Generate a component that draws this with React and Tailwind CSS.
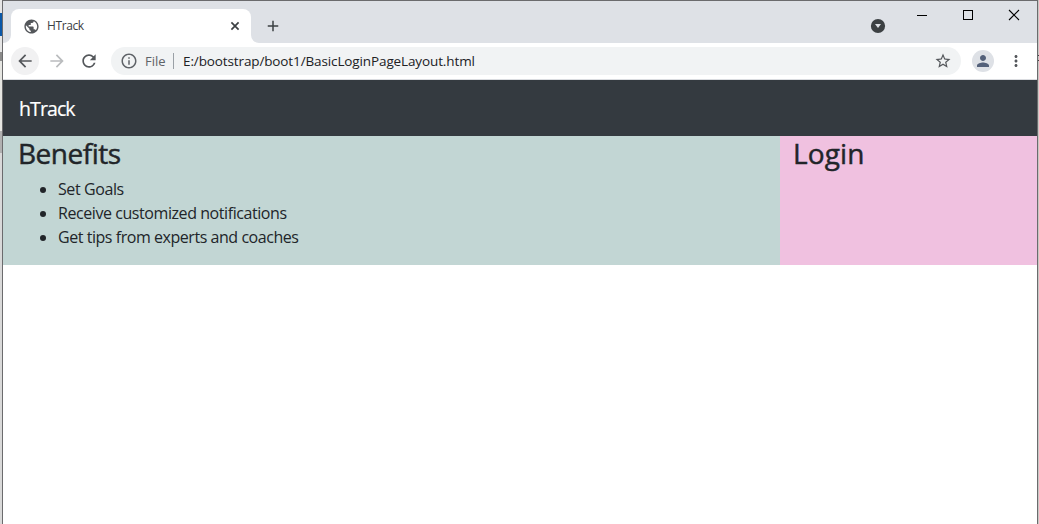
import React from "react";
import {
  MdPublic, MdAdd, MdArrowBack, MdArrowForward, MdRefresh,
  MdInfoOutline, MdStarBorder, MdPerson, MdMoreVert,
} from "react-icons/md";

function TabStrip() {
  return (
    <div className="flex h-[42px] bg-[#dee1e6]">
      <div className="flex w-2 items-end bg-[linear-gradient(to_top,#fff_8px,#dee1e6_8px)]">
        <div className="h-full w-full rounded-br-lg bg-[#dee1e6]" />
      </div>
      <div className="flex w-[240px] flex-col bg-[#dee1e6] pt-2">
        <div className="flex flex-1 items-center rounded-t-lg bg-white pr-[11px] pl-3">
          <MdPublic className="size-[17px] text-[#54575b]" />
          <span className="ml-[7px] flex-1 text-[12px] tracking-[-0.4px] text-[#3c4043]">HTrack</span>
          <svg className="size-[10px] text-[#3c4043]" viewBox="0 0 10 10">
            <path d="M1.4 1.4l7.2 7.2M8.6 1.4L1.4 8.6" stroke="currentColor" strokeWidth="1.7" />
          </svg>
        </div>
      </div>
      <div className="flex w-2 bg-white">
        <div className="h-full w-full rounded-bl-lg bg-[#dee1e6]" />
      </div>
      <div className="flex flex-1 pt-[16px] pl-[5px]">
        <MdAdd className="size-[18px] text-[#3c4043]" stroke="#3c4043" strokeWidth="0" />
      </div>
      <svg className="mt-[17px] size-4" viewBox="0 0 16 16">
        <circle cx="8" cy="8" r="7.1" fill="#3c4043" />
        <path d="M5 6h6L8 10z" fill="#dee1e6" />
      </svg>
      <div className="ml-[13px] flex h-7 w-[138px]">
        <svg className="h-7 w-[46px]" viewBox="0 0 46 28" shapeRendering="crispEdges">
          <path d="M18 14h10v1H18z" fill="#000" />
        </svg>
        <svg className="h-7 w-[46px]" viewBox="0 0 46 28" shapeRendering="crispEdges">
          <path d="M18.5 9.5h9v9h-9z" fill="none" stroke="#000" />
        </svg>
        <svg className="h-7 w-[46px]" viewBox="0 0 46 28">
          <path d="M18 9l10 10M28 9L18 19" fill="none" stroke="#000" strokeWidth="1.1" />
        </svg>
      </div>
    </div>
  );
}

function Toolbar() {
  return (
    <div className="flex h-[37px] items-center border-b border-[#dadce0] bg-white pl-2">
      <div className="flex size-7 items-center justify-center rounded-full bg-[#f1f1f2]">
        <MdArrowBack className="size-5 text-[#54575b]" />
      </div>
      <MdArrowForward className="ml-2 size-5 text-[#babcbe]" />
      <MdRefresh className="ml-3 size-5 text-[#54575b]" />
      <div className="ml-3 flex h-7 w-[850px] items-center rounded-full bg-[#f1f3f4] pr-[9px] pl-[9px]">
        <MdInfoOutline className="size-[18px] text-[#5f6368]" />
        <span className="ml-[7px] w-[28px] pt-px text-[13px] text-[#5f6368]">File</span>
        <span className="h-4 w-px bg-[#9aa0a6]" />
        <span className="ml-[9px] flex-1 text-[13.5px] tracking-[-0.12px] text-[#202124]">
          E:/bootstrap/boot1/BasicLoginPageLayout.html
        </span>
        <MdStarBorder className="size-[18px] text-[#54575b]" />
      </div>
      <div className="ml-[11px] flex size-[22px] items-center justify-center rounded-full bg-[#dee1e6]">
        <MdPerson className="size-[18px] text-[#54617a]" />
      </div>
      <MdMoreVert className="ml-[13px] size-[18px] text-[#54575b]" />
    </div>
  );
}

function Page() {
  return (
    <div className="flex-1 bg-white text-[#212529]">
      <nav className="flex h-14 items-center bg-[#343a40] pt-0.5 pl-4">
        <span className="text-[19.5px] tracking-[-0.9px] text-white [-webkit-text-stroke:0.2px_currentColor]">hTrack</span>
      </nav>
      <div className="flex h-[129px]">
        <section className="w-[777px] bg-[#c2d6d4] pl-[15px]">
          <h3 className="mb-[7px] text-[28px] leading-[34px] tracking-[-0.5px] [-webkit-text-stroke:0.45px_currentColor]">Benefits</h3>
          <ul className="list-disc pl-10 text-[16px] leading-6">
            <li className="tracking-[-0.4px]">Set Goals</li>
            <li className="tracking-[-0.43px]">Receive customized notifications</li>
            <li className="tracking-[-0.45px]">Get tips from experts and coaches</li>
          </ul>
        </section>
        <section className="flex-1 bg-[#f0c1e0] pl-[13px]">
          <h3 className="text-[28px] leading-[34px] tracking-[0.1px] [-webkit-text-stroke:0.45px_currentColor]">Login</h3>
        </section>
      </div>
    </div>
  );
}

export default function App() {
  return (
    <div className="flex h-[524px] w-[1039px] overflow-hidden bg-white font-['Open_Sans','Noto_Sans',sans-serif]">
      <div className="flex w-0.5 flex-col bg-[#d9d9d9]">
        <div className="h-[13px] bg-[#e6e6e6]" />
        <div className="h-[23px] bg-[#0a58a8]" />
        <div className="h-[16px] bg-[#e6e6e6]" />
        <div className="h-[9px] bg-[#8a8a8a]" />
        <div className="h-[70px] bg-[#e6e6e2]" />
        <div className="h-[22px] bg-[#b0b0b0]" />
      </div>
      <div className="flex w-[1036px] flex-col border-x border-t border-[#6b6b6d]">
        <TabStrip />
        <Toolbar />
        <Page />
      </div>
      <div className="flex w-px flex-col bg-[#c8c8c4]">
        <div className="mt-[55px] h-px bg-[#444444]" />
        <div className="mt-1 h-px bg-[#444444]" />
      </div>
    </div>
  );
}
